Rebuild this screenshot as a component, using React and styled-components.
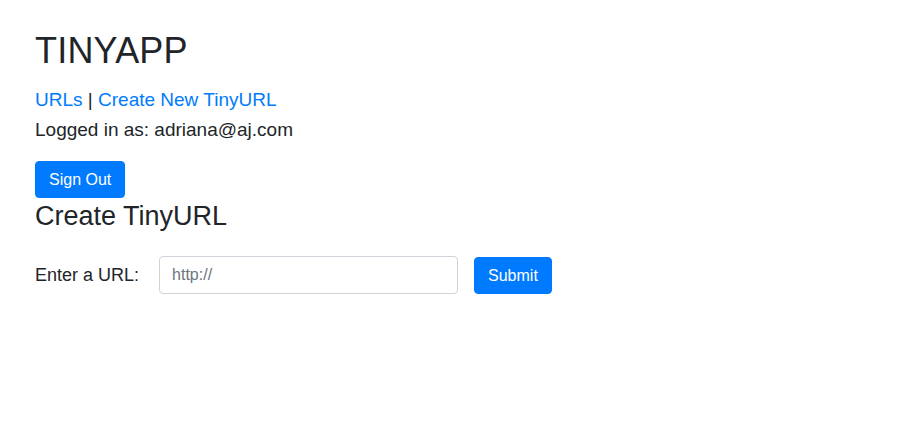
import React from "react";
import styled, { createGlobalStyle } from "styled-components";

const GlobalStyle = createGlobalStyle`
  html, body {
    margin: 0;
    padding: 0;
    background: #fff;
  }
  body {
    font-family: "Liberation Sans", Arial, sans-serif;
    color: #212529;
  }
`;

export default function App() {
  return (
    <>
      <GlobalStyle />
      <Page>
        <Header>
          <Title>TINYAPP</Title>
          <Nav>
            <a href="#urls">URLs</a>
            <Sep> | </Sep>
            <a href="#new">Create New TinyURL</a>
          </Nav>
          <Line>Logged in as: adriana@aj.com</Line>
          <Button type="button">Sign Out</Button>
        </Header>
        <main>
          <Heading>Create TinyURL</Heading>
          <Form onSubmit={(e) => e.preventDefault()}>
            <Label htmlFor="longURL">Enter a URL:</Label>
            <Input id="longURL" type="text" placeholder="http://" />
            <Button type="submit">Submit</Button>
          </Form>
        </main>
      </Page>
    </>
  );
}

const Page = styled.div`
  padding: 30px 35px;
`;

const Header = styled.header`
  display: flex;
  flex-direction: column;
  align-items: flex-start;
`;

const Title = styled.h1`
  margin: 0 0 13px;
  font-size: 36px;
  font-weight: 400;
  line-height: 42px;
  letter-spacing: 0.2px;
`;

const Nav = styled.nav`
  font-size: 19px;
  line-height: 30px;
  a {
    color: #007bff;
    text-decoration: none;
  }
`;

const Sep = styled.span`
  color: #212529;
`;

const Line = styled.div`
  font-size: 19px;
  line-height: 30px;
  margin-bottom: 16px;
`;

const Button = styled.button`
  font-family: "Liberation Sans", Arial, sans-serif;
  font-size: 16px;
  line-height: 23px;
  padding: 6px 13px;
  border: 1px solid #007bff;
  border-radius: 4px;
  background: #007bff;
  color: #fff;
  cursor: pointer;
`;

const Heading = styled.h2`
  margin: 3px 0 24px;
  font-size: 27px;
  font-weight: 400;
  line-height: 31px;
`;

const Form = styled.form`
  display: flex;
  align-items: center;
  gap: 16px;
`;

const Label = styled.label`
  font-size: 18px;
  margin-right: 4px;
`;

const Input = styled.input`
  box-sizing: border-box;
  width: 299px;
  height: 38px;
  padding: 6px 12px;
  border: 1px solid #ced4da;
  border-radius: 4px;
  font-family: "Liberation Sans", Arial, sans-serif;
  font-size: 16px;
  color: #495057;
  &::placeholder {
    color: #6c757d;
  }
`;
